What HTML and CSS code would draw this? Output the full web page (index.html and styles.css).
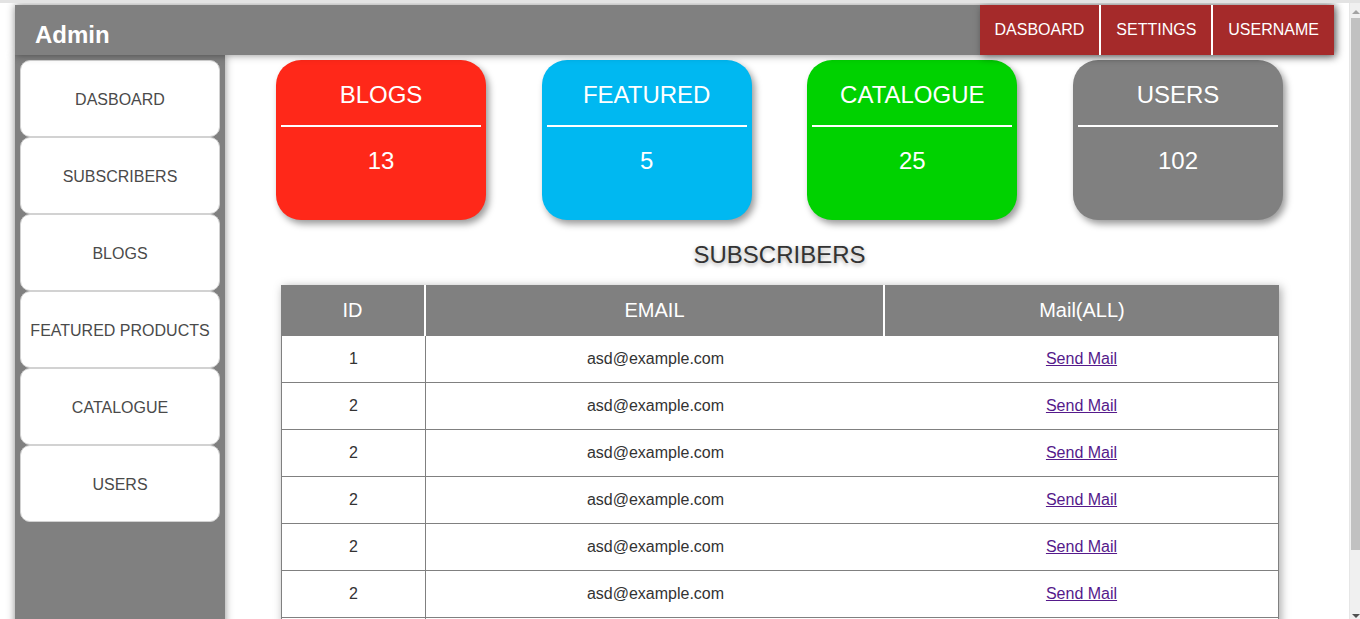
FILE: index.html
```html
<!DOCTYPE html>
<html lang="en">
<head>
  <meta charset="UTF-8" />
  <meta name="viewport" content="width=device-width, initial-scale=1.0"/>
  <title>Admin</title>
  <link rel="stylesheet" href="styles.css">
</head>
<body>

  <div class="page">

    <!-- Top Bar -->
    <header class="topbar">
      <div class="brand">Admin</div>
      <nav class="topnav">
        <a href="#">DASBOARD</a>
        <a href="#">SETTINGS</a>
        <a href="#">USERNAME</a>
      </nav>
    </header>

    <div class="layout">

      <!-- Sidebar -->
      <aside class="sidebar">
        <a href="#" class="side-link">DASBOARD</a>
        <a href="#" class="side-link">SUBSCRIBERS</a>
        <a href="#" class="side-link">BLOGS</a>
        <a href="#" class="side-link">FEATURED PRODUCTS</a>
        <a href="#" class="side-link">CATALOGUE</a>
        <a href="#" class="side-link">USERS</a>
      </aside>

      <!-- Main -->
      <main class="main">
        <div class="cards">
          <div class="card red">
            <div class="card-title">BLOGS</div>
            <div class="card-line"></div>
            <div class="card-count">13</div>
          </div>
          <div class="card blue">
            <div class="card-title">FEATURED</div>
            <div class="card-line"></div>
            <div class="card-count">5</div>
          </div>
          <div class="card green">
            <div class="card-title">CATALOGUE</div>
            <div class="card-line"></div>
            <div class="card-count">25</div>
          </div>
          <div class="card grey">
            <div class="card-title">USERS</div>
            <div class="card-line"></div>
            <div class="card-count">102</div>
          </div>
        </div>

        <h2 class="section-title">SUBSCRIBERS</h2>

        <table class="subs">
          <thead>
            <tr>
              <th class="col-id">ID</th>
              <th class="col-email">EMAIL</th>
              <th>Mail(ALL)</th>
            </tr>
          </thead>
          <tbody>
            <tr><td>1</td><td>asd@example.com</td><td><a href="#">Send Mail</a></td></tr>
            <tr><td>2</td><td>asd@example.com</td><td><a href="#">Send Mail</a></td></tr>
            <tr><td>2</td><td>asd@example.com</td><td><a href="#">Send Mail</a></td></tr>
            <tr><td>2</td><td>asd@example.com</td><td><a href="#">Send Mail</a></td></tr>
            <tr><td>2</td><td>asd@example.com</td><td><a href="#">Send Mail</a></td></tr>
            <tr><td>2</td><td>asd@example.com</td><td><a href="#">Send Mail</a></td></tr>
            <tr><td>2</td><td>asd@example.com</td><td><a href="#">Send Mail</a></td></tr>
          </tbody>
        </table>
      </main>
    </div>
  </div>

  <!-- Scrollbar -->
  <div class="scrollbar">
    <span class="arrow-up"></span>
    <div class="thumb"></div>
    <span class="arrow-down"></span>
  </div>

</body>
</html>
```

FILE: styles.css
```css
* {
  box-sizing: border-box;
  margin: 0;
  padding: 0;
}

html, body {
  height: 100%;
  overflow: hidden;
}

body {
  font-family: 'Liberation Sans', Arial, sans-serif;
  background: #fff;
  color: #333;
  display: flex;
  border-top: 3px solid #e3e3e3;
}

.page {
  flex: 1;
  margin: 2px 15px 0 15px;
  min-width: 0;
}

/* Top Bar */
.topbar {
  height: 50px;
  background: #808080;
  display: flex;
  justify-content: space-between;
  box-shadow: 0 0 8px rgba(0, 0, 0, 0.45);
  position: relative;
  z-index: 2;
}

.brand {
  color: #fff;
  font-weight: bold;
  font-size: 24px;
  line-height: 28px;
  padding: 16px 0 0 20px;
}

.topnav {
  display: flex;
  box-shadow: 2px 2px 8px rgba(0, 0, 0, 0.45);
}

.topnav a {
  background: #a52a2a;
  color: #fff;
  text-decoration: none;
  font-size: 16px;
  line-height: 50px;
  padding: 0 15px;
  border-right: 2px solid #fff;
}

.topnav a:last-child {
  border-right: none;
}

/* Layout */
.layout {
  display: flex;
  min-height: 700px;
}

.sidebar {
  width: 210px;
  flex-shrink: 0;
  background: #808080;
  padding: 5px;
  box-shadow: 0 0 8px rgba(0, 0, 0, 0.45);
  position: relative;
  z-index: 1;
}

.side-link {
  display: flex;
  align-items: center;
  justify-content: center;
  height: 77px;
  padding-top: 2px;
  background: #fff;
  border: 1px solid #d2d2d2;
  border-radius: 10px;
  color: #4a4a4a;
  font-size: 16px;
  text-decoration: none;
}

/* Main */
.main {
  flex: 1;
  padding-top: 5px;
}

.cards {
  display: flex;
  justify-content: space-between;
  padding: 0 51px;
}

.card {
  width: 210px;
  height: 160px;
  border-radius: 25px;
  padding: 21px 5px 0;
  color: #fff;
  text-align: center;
  box-shadow: 3px 4px 7px rgba(0, 0, 0, 0.4);
}

.card.red { background: #ff2819; }
.card.blue { background: #00b8f1; }
.card.green { background: #00d200; }
.card.grey { background: #808080; }

.card-title,
.card-count {
  font-size: 24px;
  line-height: 28px;
}

.card-line {
  height: 2px;
  background: #fff;
  margin: 16px 0 20px;
}

.section-title {
  text-align: center;
  font-weight: normal;
  font-size: 24px;
  line-height: 28px;
  color: #333;
  margin: 21px 0 16px;
  text-shadow: 0 2px 4px rgba(0, 0, 0, 0.35);
}

/* Table */
.subs {
  width: 998px;
  margin-left: 56px;
  border-collapse: separate;
  border-spacing: 0;
  box-shadow: 2px 2px 9px rgba(0, 0, 0, 0.35);
}

.subs th {
  background: #808080;
  color: #fff;
  font-weight: normal;
  font-size: 20px;
  height: 51px;
  border-right: 2px solid #fff;
}

.subs th:last-child {
  border-right: none;
}

.col-id { width: 145px; }
.col-email { width: 459px; }

.subs td {
  height: 47px;
  text-align: center;
  font-size: 16px;
  color: #333;
  border-bottom: 1px solid #808080;
}

.subs td:first-child {
  border-left: 1px solid #808080;
  border-right: 1px solid #808080;
}

.subs td:last-child {
  border-right: 1px solid #808080;
}

.subs a {
  color: #551a8b;
}

/* Scrollbar */
.scrollbar {
  width: 11px;
  flex-shrink: 0;
  background: #f0f0f0;
  border-left: 1px solid #e6e6e6;
  display: flex;
  flex-direction: column;
  align-items: center;
  padding: 7px 0 0 1px;
}

.arrow-up {
  border-left: 4px solid transparent;
  border-right: 4px solid transparent;
  border-bottom: 4px solid #a3a3a3;
}

.thumb {
  width: 100%;
  height: 532px;
  margin-top: 4px;
  background: #c1c1c1;
}

.arrow-down {
  margin-top: auto;
  margin-bottom: 1px;
  border-left: 4px solid transparent;
  border-right: 4px solid transparent;
  border-top: 4px solid #505050;
}
```
